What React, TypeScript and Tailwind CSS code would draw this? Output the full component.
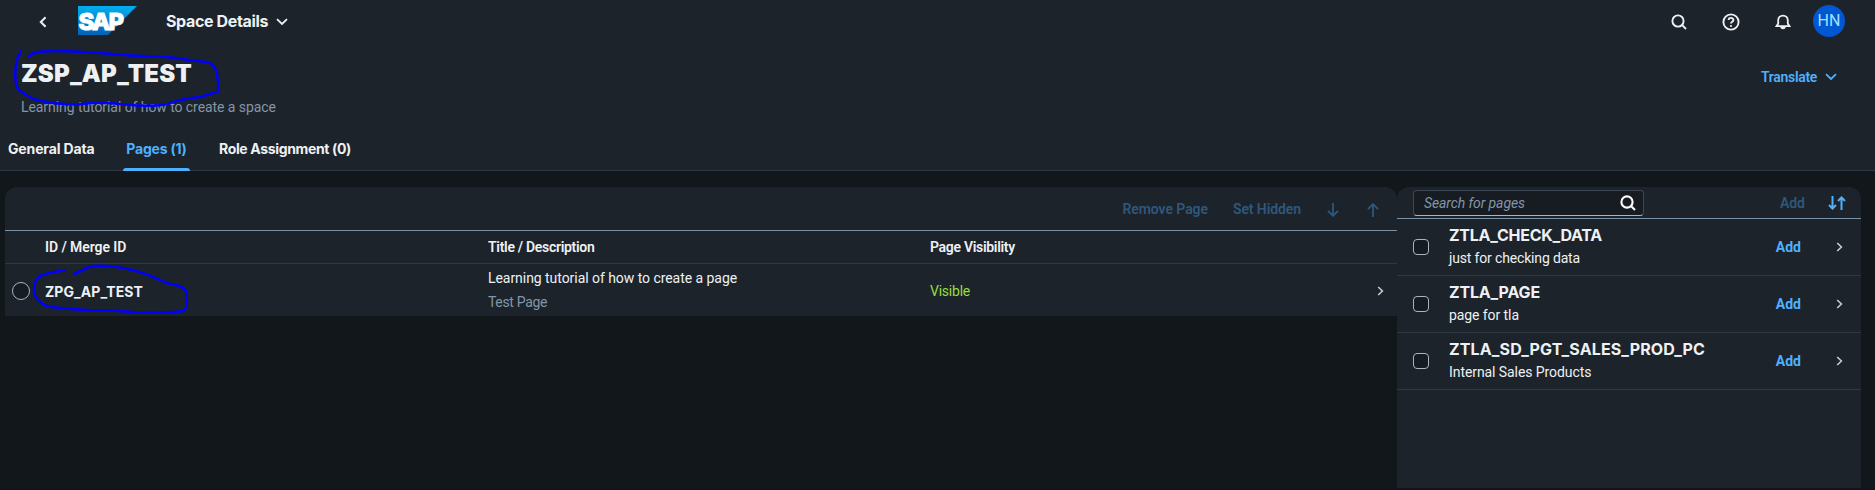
import type { ReactNode } from "react";

type IconProps = { d: string; w: number; h: number; className?: string; sw?: number; children?: ReactNode };

function Icon({ d, w, h, className, sw = 1.8, children }: IconProps) {
  return (
    <svg width={w} height={h} viewBox={`0 0 ${w} ${h}`} fill="none" stroke="currentColor" strokeWidth={sw} className={`shrink-0 ${className ?? ""}`}>
      <path d={d} />
      {children}
    </svg>
  );
}

function Magnifier({ className, sw = 1.9 }: { className?: string; sw?: number }) {
  return (
    <Icon w={16} h={16} sw={sw} className={className} d="M11.2 11.2 L15 15">
      <circle cx="7" cy="7" r="5.6" />
    </Icon>
  );
}

function SapLogo() {
  return (
    <svg width="59" height="29" viewBox="0 0 59 29" className="ml-[31px] mt-1.5 shrink-0">
      <defs>
        <linearGradient id="logo" x1="0" y1="0" x2="0" y2="1">
          <stop offset="0" stopColor="#00aeee" />
          <stop offset="1" stopColor="#0562b4" />
        </linearGradient>
      </defs>
      <polygon points="0,0 59,0 30,29 0,29" fill="url(#logo)" />
      <text x="0.6" y="23.6" textLength="43.5" lengthAdjust="spacingAndGlyphs" fill="#fff" stroke="#fff" strokeWidth="1" fontFamily="Inter, sans-serif" fontWeight="800" fontSize="23.5" letterSpacing="-1.8">
        SAP
      </text>
    </svg>
  );
}

const chevronDown = "M1 1.2 L6 6 L11 1.2";
const chevronRight = "M1.2 1 L5.4 5 L1.2 9";

function ShellBar() {
  return (
    <div className="flex h-11 items-start">
      <Icon w={8} h={12} sw={2} d="M6.6 1.2 L1.8 6 L6.6 10.8" className="ml-[39px] mt-4" />
      <SapLogo />
      <div className="ml-[29px] mt-[10px] flex h-[22px] items-center">
        <span className="text-[16px] font-bold tracking-[-0.36px]">Space Details</span>
        <Icon w={12} h={8} d={chevronDown} className="ml-[8px] mt-0.5" />
      </div>
      <div className="ml-auto flex items-start pr-[30px]">
        <Magnifier className="mt-3.5" />
        <Icon w={18} h={18} sw={1.9} className="ml-[35px] mt-[13px]" d="M6.6 7.1 C6.6 4.2 11.4 4.2 11.4 7 C11.4 8.9 9 8.8 9 10.6">
          <circle cx="9" cy="9" r="7.6" />
          <circle cx="9" cy="13" r="1.1" fill="currentColor" stroke="none" />
        </Icon>
        <Icon w={16} h={16} sw={1.8} className="ml-[35px] mt-3.5" d="M1.4 12.2 L3.2 9.6 V6.4 C3.2 3.6 5.2 1.6 8 1.6 C10.8 1.6 12.8 3.6 12.8 6.4 V9.6 L14.6 12.2 Z">
          <path d="M5.3 12.6 A2.7 2.6 0 0 0 10.7 12.6 Z" fill="currentColor" stroke="none" />
        </Icon>
        <div className="ml-[22px] mt-[5px] flex size-8 items-center justify-center rounded-full bg-[#0057d2] font-[Roboto] text-[16px] text-[#a6e0ff]">HN</div>
      </div>
    </div>
  );
}

function ObjectHeader() {
  return (
    <header className="flex h-[171px] flex-col border-b border-[#2f3943] bg-[#1d232a]">
      <ShellBar />
      <div className="flex justify-between pl-[21px] pr-[38px]">
        <div>
          <h1 className="mt-[15px] text-[24px] font-black leading-[30px] tracking-[0.16px]">ZSP_AP_TEST</h1>
          <p className="mt-[8px] font-[Roboto] text-[14px] leading-[20px] tracking-[-0.07px] text-[#8396a8]">Learning tutorial of how to create a space</p>
        </div>
        <button className="mt-[23px] flex h-[20px] items-center gap-2 font-[Roboto] text-[14px] font-semibold tracking-[-0.32px] text-[#4db1ff]">
          Translate
          <Icon w={12} h={8} d={chevronDown} />
        </button>
      </div>
      <nav className="-mb-px mt-auto flex h-[32px] pl-2 text-[14px] font-bold leading-[20px]">
        <span className="w-[115px] tracking-[-0.14px]">General Data</span>
        <span className="flex w-[67px] flex-col items-center justify-between text-[#4db1ff]">
          <span className="tracking-[-0.2px]">Pages (1)</span>
          <span className="h-[3px] w-full rounded-t-sm bg-[#4db1ff]" />
        </span>
        <span className="ml-[29px] tracking-[-0.35px]">Role Assignment (0)</span>
      </nav>
    </header>
  );
}

function SpacePages() {
  return (
    <section className="h-[129px] w-[1392px] overflow-hidden rounded-t-xl bg-[#1d232a] font-[Roboto] text-[14px]">
      <div className="flex h-11 items-center justify-end border-b border-[#7790a6] pr-[18px] pt-0.5 font-semibold text-[#2e587c]">
        <span className="tracking-[-0.07px]">Remove Page</span>
        <span className="ml-[25px] tracking-[-0.09px]">Set Hidden</span>
        <Icon w={12} h={14} d="M6 0 V12.6 M1 7.8 L6 12.8 L11 7.8" className="ml-[26px]" />
        <Icon w={12} h={14} d="M6 14 V1.4 M1 6.2 L6 1.2 L11 6.2" className="ml-[28px]" />
      </div>
      <div className="flex h-[33px] items-center border-b border-[#2f3943] pl-10 font-semibold">
        <span className="w-[443px] tracking-[-0.07px]">ID / Merge ID</span>
        <span className="w-[442px] tracking-[-0.3px]">Title / Description</span>
        <span className="tracking-[-0.3px]">Page Visibility</span>
      </div>
      <div className="flex h-[52px] items-center pl-[7px]">
        <span className="mt-0.5 size-[18px] shrink-0 rounded-full border border-[#a9b4be] bg-[#171b22]" />
        <span className="ml-[15px] mt-0.5 w-[443px] font-[Inter] font-bold tracking-[0.06px]">ZPG_AP_TEST</span>
        <div className="w-[442px] leading-[24px]">
          <div className="-mt-px tracking-[-0.05px]">Learning tutorial of how to create a page</div>
          <div className="tracking-[-0.33px] text-[#8396a8]">Test Page</div>
        </div>
        <span className="mt-0.5 tracking-[-0.23px] text-[#97dd40]">Visible</span>
        <Icon w={7} h={10} sw={1.6} d={chevronRight} className="ml-auto mr-[13px] mt-0.5 text-[#c3ccd4]" />
      </div>
    </section>
  );
}

const available = [
  { id: "ZTLA_CHECK_DATA", idClass: "tracking-[-0.26px]", title: "just for checking data", titleClass: "tracking-[-0.16px]" },
  { id: "ZTLA_PAGE", idClass: "tracking-[-0.17px]", title: "page for tla", titleClass: "tracking-[-0.08px]" },
  { id: "ZTLA_SD_PGT_SALES_PROD_PC", idClass: "tracking-[0.13px]", title: "Internal Sales Products", titleClass: "tracking-[-0.08px]" },
];

function AvailablePages() {
  return (
    <section className="w-[464px] overflow-hidden rounded-t-xl bg-[#1d232a] font-[Roboto] text-[14px]">
      <div className="flex h-8 items-start border-b border-[#7790a6] pl-4 pr-[15px] pt-[3px]">
        <div className="flex h-[26px] w-[231px] items-center justify-between rounded-[4px] border border-b-[#a9b4be] border-l-[#3d4751] border-r-[#3d4751] border-t-[#3d4751] bg-[#171b22] pl-2.5 pr-[7px]">
          <span className="italic tracking-[-0.1px] text-[#8396a8]">Search for pages</span>
          <Magnifier sw={2.1} className="text-white" />
        </div>
        <span className="ml-auto mt-[3px] font-semibold text-[#2e587c]">Add</span>
        <Icon w={18} h={14} sw={2} className="ml-[23px] mt-[6px] text-[#4db1ff]" d="M4.5 0 V12.4 M1 9 L4.5 12.6 L8 9 M13.5 14 V1.6 M10 5 L13.5 1.4 L17 5" />
      </div>
      {available.map((p) => (
        <div key={p.id} className="flex h-[57px] items-center border-b border-[#2f3943] pl-4 pr-[18px]">
          <span className="size-4 shrink-0 rounded-[4px] border border-[#a9b4be] bg-[#171b22]" />
          <div className="ml-5">
            <div className={`-mt-px mb-px font-[Inter] text-[16px] font-bold leading-[22px] ${p.idClass}`}>{p.id}</div>
            <div className={`leading-[22px] ${p.titleClass}`}>{p.title}</div>
          </div>
          <button className="ml-auto font-bold text-[#4db1ff]">Add</button>
          <Icon w={7} h={10} sw={1.6} d={chevronRight} className="ml-[35px] text-[#c3ccd4]" />
        </div>
      ))}
    </section>
  );
}

function Markup() {
  return (
    <svg className="pointer-events-none absolute left-0 top-0" width="240" height="330" fill="none" stroke="#0000ff" strokeWidth="2.5" strokeLinecap="round" strokeLinejoin="round">
      <path d="M21 51 L17.5 58 C14.5 68 14.5 82 17.5 88 C20 92 27 95 32 98.5 C45 102.5 62 104.5 78 104.5 C95 101.5 110 102.5 125 104.5 C145 106.5 165 107 176 101 C184 98.5 190 98 200 97 L218 91.5 C219 82 217 68 212 64.5 C209 61.5 205 62 198 61 C185 60 178 57.5 165 57 C140 56 120 55 100 53 C80 51.5 65 50.5 50 51 C42 52 30 51 29 57" />
      <path d="M65 270.5 C55 271.5 48 273 41 275.5 C36 280 34 282 34 290 C34 297 38 301 45 305.5 C55 308 75 309.5 95 310.5 C115 309 130 313 150 312.7 C165 312.7 178 312.5 184 310.5 C188 307 187 300 186 291 C184 286.5 178 285.5 168 283.5 C155 278 145 272.5 130 269.5 C118 266.5 105 265.5 98 265.8 C92 265.5 88 267 84 269.5 L74 274" />
    </svg>
  );
}

export default function App() {
  return (
    <div className="relative flex h-[490px] w-[1875px] flex-col overflow-hidden bg-[#12171b] font-[Inter] text-[#eef1f4]">
      <ObjectHeader />
      <main className="flex flex-1 pl-[5px] pt-4">
        <SpacePages />
        <AvailablePages />
      </main>
      <div className="h-[2px] shrink-0 bg-[#15131b]" />
      <Markup />
    </div>
  );
}
